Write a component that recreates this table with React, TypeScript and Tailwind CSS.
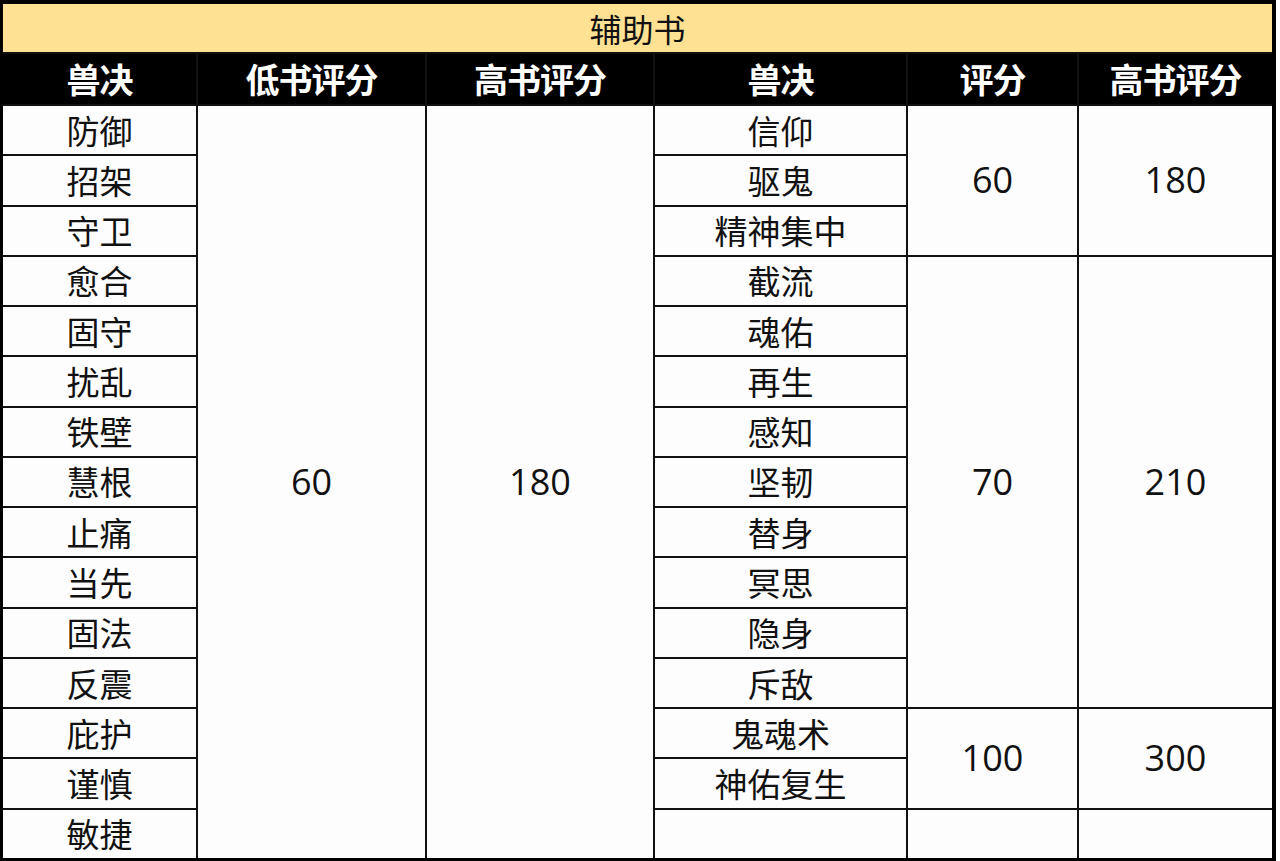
import React from "react";

const left = ["防御", "招架", "守卫", "愈合", "固守", "扰乱", "铁壁", "慧根", "止痛", "当先", "固法", "反震", "庇护", "谨慎", "敏捷"];
const right = ["信仰", "驱鬼", "精神集中", "截流", "魂佑", "再生", "感知", "坚韧", "替身", "冥思", "隐身", "斥敌", "鬼魂术", "神佑复生", ""];

const rowStart = [
  "row-start-3", "row-start-4", "row-start-5", "row-start-6", "row-start-7",
  "row-start-8", "row-start-9", "row-start-10", "row-start-11", "row-start-12",
  "row-start-13", "row-start-14", "row-start-15", "row-start-16", "row-start-17",
];

const textCell = "bg-[#fdfdfd] flex items-center justify-center text-[33px] text-[#111] leading-none";
const numCell =
  "bg-[#fdfdfd] flex items-center justify-center text-[36px] text-[#111] leading-none font-['Open_Sans','Noto_Sans',sans-serif]";

export default function App() {
  const headers = ["兽决", "低书评分", "高书评分", "兽决", "评分", "高书评分"];
  return (
    <div className="w-[1280px] h-[861px] bg-white">
      <div className="w-[1276px] h-[861px] bg-[#111] border-l-[3px] border-r-[4px] border-t-[4px] border-b-[3px] border-black grid grid-cols-[193px_227px_226px_251px_169px_193px] grid-rows-[48px_50px_repeat(15,minmax(0,1fr))] gap-[2px] font-['Noto_Sans_CJK_SC','Microsoft_YaHei',sans-serif]">
        <div className="col-span-6 row-start-1 bg-[#ffe194] flex items-center justify-center text-[32px] text-[#111] leading-none">
          辅助书
        </div>
        {headers.map((h, i) => (
          <div
            key={i}
            className="row-start-2 bg-black flex items-center justify-center text-white font-bold text-[34px] leading-none tracking-[-1px]"
          >
            {h}
          </div>
        ))}
        {left.map((t, i) => (
          <div key={"l" + i} className={`col-start-1 ${rowStart[i]} ${textCell}`}>
            {t}
          </div>
        ))}
        <div className={`col-start-2 row-start-3 row-span-15 ${numCell}`}>60</div>
        <div className={`col-start-3 row-start-3 row-span-15 ${numCell}`}>180</div>
        {right.map((t, i) => (
          <div key={"r" + i} className={`col-start-4 ${rowStart[i]} ${textCell}`}>
            {t}
          </div>
        ))}
        <div className={`col-start-5 row-start-3 row-span-3 ${numCell}`}>60</div>
        <div className={`col-start-6 row-start-3 row-span-3 ${numCell}`}>180</div>
        <div className={`col-start-5 row-start-6 row-span-9 ${numCell}`}>70</div>
        <div className={`col-start-6 row-start-6 row-span-9 ${numCell}`}>210</div>
        <div className={`col-start-5 row-start-15 row-span-2 ${numCell}`}>100</div>
        <div className={`col-start-6 row-start-15 row-span-2 ${numCell}`}>300</div>
        <div className="col-start-5 row-start-17 bg-[#fdfdfd]" />
        <div className="col-start-6 row-start-17 bg-[#fdfdfd]" />
      </div>
    </div>
  );
}
